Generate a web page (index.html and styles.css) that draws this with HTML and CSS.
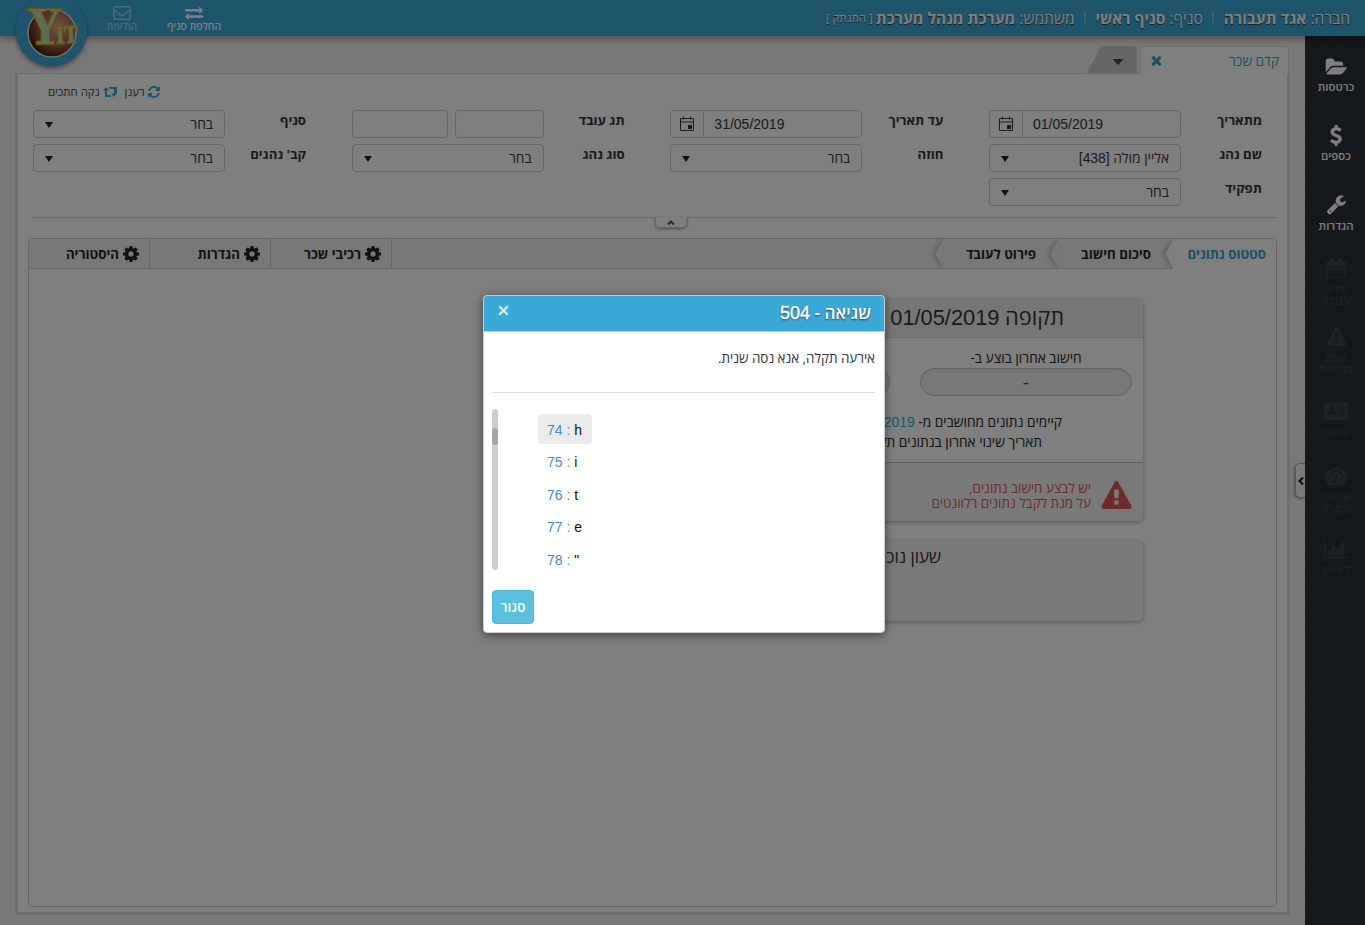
FILE: index.html
```html
<!DOCTYPE html>
<html lang="he" dir="rtl">
<head>
<meta charset="utf-8">
<title>קדם שכר</title>
<link rel="stylesheet" href="styles.css">
</head>
<body>
<svg class="defs" aria-hidden="true">
  <symbol id="cog" viewBox="128 128 1536 1536"><path d="M1152 896q0-106-75-181t-181-75-181 75-75 181 75 181 181 75 181-75 75-181zm512-109v222q0 12-8 23t-20 13l-185 28q-19 54-39 91 35 50 107 138 10 12 10 25t-9 23q-27 37-99 108t-94 71q-12 0-26-9l-138-108q-44 23-91 38-16 136-29 186-7 28-36 28h-222q-14 0-24.500-8.500t-11.500-21.500l-28-184q-49-16-90-37l-141 107q-10 9-25 9-14 0-25-11-126-114-165-168-7-10-7-23 0-12 8-23 15-21 51-66.500t54-70.500q-27-50-41-99l-183-27q-13-2-21-12.500t-8-23.500v-222q0-12 8-23t19-13l186-28q14-46 39-92-40-57-107-138-10-12-10-24 0-10 9-23 26-36 98.500-107.500t94.500-71.500q13 0 26 10l138 107q44-23 91-38 16-136 29-186 7-28 36-28h222q14 0 24.500 8.500t11.500 21.500l28 184q49 16 90 37l142-107q9-9 24-9 13 0 25 10 129 119 165 170 7 8 7 22 0 12-8 23-15 21-51 66.500t-54 70.500q26 50 41 98l183 28q13 2 21 12.500t8 23.500z"/></symbol>
  <symbol id="warn" viewBox="0 0 1792 1664"><path d="M1024 1375v-190q0-14-9.500-23.500t-22.500-9.500h-192q-13 0-22.500 9.500t-9.500 23.500v190q0 14 9.500 23.500t22.500 9.500h192q13 0 22.500-9.500t9.500-23.500zm-2-374l18-459q0-12-10-19-13-11-24-11h-220q-11 0-24 11-10 7-10 21l17 457q0 10 10 16.500t24 6.500h185q14 0 23.500-6.500t10.500-16.500zm-14-934l768 1408q35 63-2 126-17 29-46.500 46t-63.500 17h-1536q-34 0-63.500-17t-46.500-46q-37-63-2-126l768-1408q17-31 47-49t65-18 65 18 47 49z"/></symbol>
  <symbol id="times" viewBox="302 238 1188 1316"><path d="M1490 1322q0 40-28 68l-136 136q-28 28-68 28t-68-28l-294-294-294 294q-28 28-68 28t-68-28l-136-136q-28-28-28-68t28-68l294-294-294-294q-28-28-28-68t28-68l136-136q28-28 68-28t68 28l294 294 294-294q28-28 68-28t68 28l136 136q28 28 28 68t-28 68l-294 294 294 294q28 28 28 68z"/></symbol>
  <symbol id="date" viewBox="0 0 16 16"><path fill="none" stroke="currentColor" d="M1.500 2.500h13v12h-13zM1.500 6h13M4.500 .5v3M11.500 .5v3"/><path d="M9 9h4v4H9z"/></symbol>
</svg>

<header class="topbar">
  <div class="session">
    <span>חברה: <b>אגד תעבורה</b></span><i class="bar"></i>
    <span>סניף: <b>סניף ראשי</b></span><i class="bar"></i>
    <span>משתמש: <b>מערכת מנהל מערכת</b></span><small>[ התנתק ]</small>
  </div>
  <nav class="quick">
    <a class="quick-item"><svg width="18" height="14" viewBox="0 192 1792 1450" preserveAspectRatio="none"><path d="M1792 1184v192q0 13-9.500 22.500t-22.500 9.500h-1376v192q0 13-9.500 22.500t-22.500 9.500q-12 0-24-10l-319-320q-9-9-9-22 0-14 9-23l320-320q9-9 23-9 13 0 22.500 9.500t9.500 22.500v192h1376q13 0 22.500 9.500t9.500 22.500zm0-544q0 14-9 23l-320 320q-9 9-23 9-13 0-22.500-9.500t-9.500-22.500v-192h-1376q-13 0-22.500-9.500t-9.500-22.500v-192q0-13 9.500-22.500t22.500-9.500h1376v-192q0-14 9-23t23-9q12 0 24 10l319 319q9 9 9 23z"/></svg>החלפת סניף</a>
    <a class="quick-item faded"><svg width="18" height="14" viewBox="0 0 18 14"><g fill="none" stroke="currentColor" stroke-width="1.500"><rect x=".75" y=".75" width="16.500" height="12.500" rx="1.500"/><path d="M1 4l6.500 5q1.500 1 3 0L17 4"/></g></svg>הודעות</a>
  </nav>
  <svg class="logo" width="76" height="76" viewBox="0 0 76 76">
    <defs><radialGradient id="ball" cx=".62" cy=".38" r=".7"><stop offset="0" stop-color="#e0a585"/><stop offset=".55" stop-color="#9a6044"/><stop offset="1" stop-color="#2c1308"/></radialGradient></defs>
    <circle cx="37.500" cy="37" r="35.500" fill="#3ba9d8"/>
    <circle cx="38" cy="39" r="24" fill="url(#ball)" stroke="#d9e4e8" stroke-width="1.500"/>
    <g class="logo-text"><text x="14" y="50" font-size="53" textLength="34" lengthAdjust="spacingAndGlyphs">Y</text><text x="42" y="49" font-size="25" textLength="22" lengthAdjust="spacingAndGlyphs" transform="rotate(-3 52 40)">IT</text></g>
  </svg>
</header>

<div class="shell">
  <aside class="side">
    <a class="side-item"><svg width="22" height="17" viewBox="0 128 1944 1408"><path d="M1943 952q0 31-31 66l-336 396q-43 51-120.500 86.500t-143.500 35.500h-1088q-34 0-60.500-13t-26.500-43q0-31 31-66l336-396q43-51 120.500-86.500t143.500-35.500h1088q34 0 60.500 13t26.500 43zm-343-344v160h-832q-94 0-197 47.500t-164 119.500l-337 396-5 6q0-4-.5-12.500t-.5-12.500v-960q0-92 66-158t158-66h320q92 0 158 66t66 158v32h544q92 0 158 66t66 158z"/></svg><span>כרטסות</span></a>
    <a class="side-item"><svg width="22" height="21" viewBox="0 0 1792 1792"><path d="M1362 1185q0 153-99.500 263.500t-258.500 136.500v175q0 14-9 23t-23 9h-135q-13 0-22.500-9.500t-9.500-22.500v-175q-66-9-127.500-31t-101.500-44.500-74-48-46.500-37.500-17.500-18q-17-21-2-41l103-135q7-10 23-12 15-2 24 9l2 2q113 99 243 125 37 8 74 8 81 0 142.500-43t61.500-122q0-28-15-53t-33.500-42-58.500-37.500-66-32-80-32.500q-39-16-61.500-25t-61.500-26.500-62.500-31-56.500-35.500-53.500-42.500-43.500-49-35.500-58-21-66.500-8.500-78q0-138 98-242t255-134v-180q0-13 9.500-22.500t22.500-9.500h135q14 0 23 9t9 23v176q57 6 110.500 23t87 33.500 63.500 37.500 39 29 15 14q17 18 5 38l-81 146q-8 15-23 16-14 3-27-7-3-3-14.500-12t-39-26.500-58.500-32-74.500-26-85.500-11.500q-95 0-155 43t-60 111q0 26 8.500 48t29.500 41.500 39.500 33 56 31 60.500 27 70 27.500q53 20 81 31.500t76 35 75.500 42.500 62 50 53 63.500 31.500 76.500 13 94z" stroke="currentColor" stroke-width="60"/></svg><span>כספים</span></a>
    <a class="side-item"><svg width="20" height="20" viewBox="0 128 1728 1664"><path d="M448 1472q0-26-19-45t-45-19-45 19-19 45 19 45 45 19 45-19 19-45zm644-420l-682 682q-37 37-90 37-52 0-91-37l-106-108q-38-36-38-90 0-53 38-91l681-681q39 98 114.500 173.500t173.500 114.500zm634-435q0 39-23 106-47 134-164.500 217.500t-258.500 83.500q-185 0-316.500-131.500t-131.500-316.500 131.500-316.500 316.500-131.500q58 0 121.500 16.500t107.500 46.500q16 11 16 28t-16 28l-293 169v224l193 107q5-3 79-48.500t135.500-81 70.500-35.500q15 0 23.500 10t8.500 25z"/></svg><span>הגדרות</span></a>
    <a class="side-item off"><svg width="20" height="20" viewBox="0 0 20 20"><path fill-rule="evenodd" d="M1 3h3V1q0-1 1-1h1q1 0 1 1v2h6V1q0-1 1-1h1q1 0 1 1v2h3q1 0 1 1v15q0 1-1 1H1q-1 0-1-1V4q0-1 1-1zM2 8v2.500h3.300V8zm4.300 0v2.500h3.200V8zm4.200 0v2.500h3.200V8zm4.200 0v2.500H18V8zM2 11.500V14h3.300v-2.500zm4.300 0V14h3.200v-2.500zm4.200 0V14h3.200v-2.500zm4.200 0V14H18v-2.500zM2 15v3h3.300v-3zm4.300 0v3h3.200v-3zm4.200 0v3h3.200v-3zm4.200 0v3H18v-3z"/></svg><span>סידור<br>עבודה</span></a>
    <a class="side-item off"><svg width="21" height="19"><use href="#warn"/></svg><span>קצין<br>בטיחות</span></a>
    <a class="side-item off"><svg width="24" height="18" viewBox="0 0 24 18"><path fill-rule="evenodd" d="M2 0h20q2 0 2 2v14q0 2-2 2H2q-2 0-2-2V2Q0 0 2 0zm6 4a2.700 2.700 0 1 0 .01 0zM3.500 13h9q0-4-2.500-4-2 1.500-4 0-2.500 0-2.500 4zM14 5v1.500h7V5zm0 3v1.500h7V8zm0 3v1.500h7V11z"/></svg><span>פניות</span></a>
    <a class="side-item off"><svg width="20" height="17" viewBox="0 0 20 17"><path fill-rule="evenodd" d="M10 0a10 10 0 0 1 8.500 16q-.5 1-1.500 1H3q-1 0-1.500-1A10 10 0 0 1 10 0zM4 8.500a1.400 1.400 0 1 0 .01 0zm2-5a1.400 1.400 0 1 0 .01 0zM10 1.500a1.400 1.400 0 1 0 .01 0zm4 2a1.400 1.400 0 1 0 .01 0zm2 5a1.400 1.400 0 1 0 .01 0zM10.500 6L9 11a2 2 0 1 0 1.500.2L12 6z"/></svg><span>שליטה<br>ובקרה</span></a>
    <a class="side-item off"><svg width="24" height="18" viewBox="0 0 24 18"><path d="M0 0h1.500v16.500H24V18H0zM4 10h3v5H4zm4-5h3v10H8zm5 3h3v7h-3zm4-6h3v13h-3z"/></svg><span>דוחות</span></a>
    <i class="side-handle"><svg width="6" height="8" viewBox="0 0 6 8"><path d="M5 .5L1.500 4L5 7.500" fill="none" stroke="#111" stroke-width="2"/></svg></i>
  </aside>

  <main class="main">
    <div class="tabs">
      <div class="tab-active"><span>קדם שכר</span><svg width="11" height="11"><use href="#times"/></svg></div>
      <svg class="tab-more" width="50" height="27" viewBox="0 0 50 27"><path d="M0 27L12 4Q14 0 18 0H46Q50 0 50 4V27z" fill="#ccc"/><path d="M25.500 13h11l-5.500 6z" fill="#444"/></svg>
    </div>
    <section class="panel">
      <div class="tools">
        <a>רענן<svg width="12" height="12" viewBox="128 128 1536 1536"><path d="M1639 1056q0 5-1 7-64 268-268 434.500t-478 166.500q-146 0-282.500-55t-243.500-157l-129 129q-19 19-45 19t-45-19-19-45v-448q0-26 19-45t45-19h448q26 0 45 19t19 45-19 45l-137 137q71 66 161 102t187 36q134 0 250-65t186-179q11-17 53-117 8-23 30-23h192q13 0 22.500 9.500t9.500 22.500zm25-800v448q0 26-19 45t-45 19h-448q-26 0-45-19t-19-45 19-45l138-138q-148-137-349-137-134 0-250 65t-186 179q-11 17-53 117-8 23-30 23h-199q-13 0-22.500-9.500t-9.500-22.500v-7q65-268 270-434.500t480-166.500q146 0 284 55.500t245 156.500l130-129q19-19 45-19t45 19 19 45z"/></svg></a>
        <a>נקה חתכים<svg width="14" height="10" viewBox="0 0 14 10"><path d="M3 0L6 3.500H4V8h3l1.500 2H2V3.500H0zM5.500 0H14v6.500l-1.500 0h1L11 10L8 6.500h3V2H7z"/></svg></a>
      </div>
      <div class="filters">
        <div class="field"><label>מתאריך</label><div class="box date"><span>01/05/2019</span><i><svg width="16" height="16"><use href="#date"/></svg></i></div></div>
        <div class="field"><label>עד תאריך</label><div class="box date"><span>31/05/2019</span><i><svg width="16" height="16"><use href="#date"/></svg></i></div></div>
        <div class="field"><label>תג עובד</label><div class="pair"><div class="box"></div><div class="box wide"></div></div></div>
        <div class="field"><label>סניף</label><div class="box select">בחר</div></div>
        <div class="field"><label>שם נהג</label><div class="box select"><span>אליין מולה <span class="num">[438]</span></span></div></div>
        <div class="field"><label>חוזה</label><div class="box select">בחר</div></div>
        <div class="field"><label>סוג נהג</label><div class="box select">בחר</div></div>
        <div class="field"><label>קב' נהגים</label><div class="box select">בחר</div></div>
        <div class="field"><label>תפקיד</label><div class="box select">בחר</div></div>
      </div>
      <div class="divider"><i class="fold"><svg width="8" height="5" viewBox="0 0 8 5"><path d="M1 4.500L4 1.500L7 4.500" fill="none" stroke="#555" stroke-width="2"/></svg></i></div>
      <section class="work">
        <div class="steps">
          <div class="step current">סטטוס נתונים</div>
          <svg class="arrow first" width="9" height="30" viewBox="0 0 9 30"><path d="M9 0L1 15L9 30z" fill="#fff"/><path d="M9 0L1 15L9 30" fill="none" stroke="#ccc"/></svg>
          <div class="step">סיכום חישוב</div>
          <svg class="arrow" width="9" height="30" viewBox="0 0 9 30"><path d="M9 0L1 15L9 30z" fill="#f0f0f0"/><path d="M9 0L1 15L9 30" fill="none" stroke="#ccc"/></svg>
          <div class="step">פירוט לעובד</div>
          <svg class="arrow" width="9" height="30" viewBox="0 0 9 30"><path d="M9 0L1 15L9 30z" fill="#f0f0f0"/><path d="M9 0L1 15L9 30" fill="none" stroke="#ccc"/></svg>
          <div class="actions">
            <a><svg width="16" height="16"><use href="#cog"/></svg>רכיבי שכר</a>
            <a><svg width="16" height="16"><use href="#cog"/></svg>הגדרות</a>
            <a><svg width="16" height="16"><use href="#cog"/></svg>היסטוריה</a>
          </div>
        </div>
        <article class="card">
          <h2>תקופה <span class="num">01/05/2019</span></h2>
          <div class="card-body">
            <div class="pills">
              <div><p>חישוב אחרון בוצע ב-</p><div class="pill">-</div></div>
              <div><p></p><div class="pill"></div></div>
            </div>
            <p class="line">קיימים נתונים מחושבים מ- <em>01/05/2019</em></p>
            <p class="line second">תאריך שינוי אחרון בנתונים תקופה</p>
          </div>
          <div class="alert"><svg width="31" height="28" viewBox="0 0 31 28"><use href="#warn" width="31" height="28"/></svg><span>יש לבצע חישוב נתונים,<br>על מנת לקבל נתונים רלוונטים</span></div>
        </article>
        <article class="card clock">שעון נוכחות</article>
      </section>
    </section>
  </main>
</div>

<div class="backdrop"></div>
<div class="modal" role="dialog">
  <div class="modal-head"><h1>שגיאה - <span class="num">504</span></h1><svg width="11" height="11" viewBox="0 0 11 11"><path d="M1.200 1.200l8.600 8.600M9.800 1.200l-8.600 8.600" stroke="#d3ecf7" stroke-width="2.300"/></svg></div>
  <p class="message">אירעה תקלה, אנא נסה שנית.</p>
  <div class="scroll" dir="ltr">
    <div class="track"><i></i></div>
    <ul>
      <li class="hit"><b>74 :</b> h</li>
      <li><b>75 :</b> i</li>
      <li><b>76 :</b> t</li>
      <li><b>77 :</b> e</li>
      <li><b>78 :</b> "</li>
    </ul>
  </div>
  <button class="close">סגור</button>
</div>
</body>
</html>
```
FILE: styles.css
```css
* { box-sizing: border-box; }
body { margin: 0; height: 925px; overflow: hidden; background: #f0f0f0; color: #333; font: 14px "Open Sans", "Liberation Sans", sans-serif; display: flex; flex-direction: column; }
p, h1, h2, ul { margin: 0; padding: 0; }
svg { fill: currentColor; flex: none; }
.defs { position: absolute; width: 0; height: 0; }
.num { font-family: "Liberation Sans", sans-serif; }

.topbar { position: relative; z-index: 2; flex: none; height: 36px; background: #3ba9d8; color: #fff; display: flex; justify-content: space-between; box-shadow: 0 2px 8px rgba(0,0,0,.4); }
.session { display: flex; align-items: center; padding: 0 15px 1px 0; font-size: 15.55px; text-shadow: 0 1px 1px #333; white-space: nowrap; }
.session small { font-size: 11.5px; margin-right: 3px; }
.bar { width: 2px; height: 15px; margin: 0 9.500px; background: #73c1e3; }
.quick { display: flex; padding-left: 104px; }
.quick-item { display: flex; flex-direction: column; align-items: center; padding-top: 6px; font-size: 10.3px; line-height: 13px; font-weight: 600; white-space: nowrap; width: 56px; }
.quick-item.faded { opacity: .5; width: 36px; margin-right: 26px; }
.logo { position: absolute; left: 14px; top: -6px; filter: drop-shadow(0 2px 2px rgba(0,0,0,.4)); direction: ltr; overflow: visible; }
.logo-text { fill: #bddaa5; stroke: #d9a21a; stroke-width: 2.400px; paint-order: stroke; font-family: "Liberation Serif", serif; font-weight: bold; }

.shell { flex: 1; display: flex; min-height: 0; }
.side { position: relative; width: 60px; flex: none; padding-top: 18px; color: #fff; background: repeating-linear-gradient(45deg, #272e35 0 1px, #2a3138 1px 3px); }
.side-item { display: grid; grid-template-rows: 24px auto; align-content: start; justify-items: center; align-items: center; row-gap: 3px; height: 69px; padding-left: 2px; font-size: 11.4px; line-height: 12px; font-weight: 600; text-align: center; }
.side-item:nth-child(2) { height: 70px; }
.side-item:nth-child(3) { height: 63px; }
.side-item:nth-child(4) { height: 68px; }
.side-item:nth-child(5) { height: 75px; }
.side-item:nth-child(6) { height: 65px; }
.side-item:nth-child(7) { height: 73px; }
.side-item.off { color: #3b4249; }
.side-handle { position: absolute; left: -10px; top: 427px; width: 10px; height: 35px; background: #f4f4f4; border: 1px solid #aaa; border-right: 0; border-radius: 5px 0 0 5px; display: grid; place-items: center; box-shadow: -1px 1px 3px rgba(0,0,0,.3); }

.main { flex: 1; padding: 10px 15px 10px; display: flex; flex-direction: column; min-width: 0; }
.tabs { display: flex; height: 27px; gap: 3px; padding-right: 1px; }
.tab-active { width: 149px; height: 28px; background: #fff; border: 1px solid #ddd; border-bottom: 0; border-radius: 4px 4px 0 0; display: flex; align-items: center; justify-content: space-between; padding: 0 9px 1px 10px; color: #3b9fc9; font-size: 13.6px; position: relative; }
.panel { flex: 1; background: #fff; border: solid #dadada; border-width: 1px 3px 3px; padding: 10px 10px 5px; display: flex; flex-direction: column; min-height: 0; }
.tools { display: flex; direction: ltr; flex-direction: row-reverse; justify-content: flex-end; gap: 8px; padding-left: 20px; height: 16px; align-items: center; font-size: 11.4px; line-height: 14px; color: #444; }
.tools a { display: flex; gap: 3px; align-items: center; }
.tools svg { color: #3ba9d8; }

.filters { margin: 10px 15px 0 5px; display: grid; grid-template-columns: repeat(4, 273px); justify-content: space-between; row-gap: 6px; }
.field { display: flex; justify-content: space-between; height: 28px; font-size: 13.2px; }
.field label { font-weight: bold; line-height: 20px; white-space: nowrap; }
.box { width: 192px; height: 28px; border: 1px solid #ccc; border-radius: 4px; background: #fff; }
.pair { width: 192px; display: flex; gap: 7px; }
.pair .box { width: 89px; }
.pair .wide { width: 96px; }
.date { display: flex; direction: ltr; flex-direction: row-reverse; justify-content: flex-end; align-items: center; font: 14px/26px "Liberation Sans", sans-serif; }
.date i { width: 33px; height: 26px; border-right: 1px solid #ccc; display: grid; place-items: center; margin-right: 10px; }
.select { display: flex; justify-content: space-between; align-items: center; padding: 0 11px 2px; font-size: 13.8px; }
.select::after { content: ""; border: solid transparent; border-width: 6px 4.500px 0; border-top-color: #222; margin-top: 4px; }
.divider { height: 1px; flex: none; background: #d5d5d5; margin: 11px 1px 20px 4px; display: flex; justify-content: center; }
.fold { width: 32px; height: 11px; flex: none; background: #fff; border: 1px solid #ccc; border-top: 0; border-radius: 0 0 5px 5px; box-shadow: 0 1px 3px rgba(0,0,0,.4); display: grid; place-items: center; margin-right: -33px; }

.work { flex: 1; border: 1px solid #ccc; border-radius: 5px; min-height: 0; }
.steps { display: flex; height: 30px; background: #f0f0f0; border-bottom: 1px solid #ccc; border-radius: 4px 4px 0 0; font-size: 13.3px; font-weight: bold; color: #222; }
.step { width: 106px; padding-right: 13px; display: flex; align-items: center; white-space: nowrap; }
.step.current { width: 103px; height: 30px; padding-right: 10px; background: #fff; color: #3b9fc9; border-radius: 0 4px 0 0; }
.arrow { filter: drop-shadow(-2px 0 2px rgba(0,0,0,.2)); }
.actions { margin-right: auto; display: flex; }
.actions a { width: 121px; border-left: 1px solid #ccc; display: flex; align-items: center; gap: 4px; padding-right: 10px; }
.actions a:first-child { width: 122px; border-right: 1px solid #ccc; }
.actions a:last-child { width: 120px; border-left: 0; }

.card { width: 475px; margin: 30px 133px 0 0; background: #f2f2f2; border-radius: 5px; box-shadow: 0 1px 4px rgba(0,0,0,.35); overflow: hidden; height: 222px; }
.card h2 { height: 39px; padding-right: 79px; font-size: 21.8px; line-height: 36px; font-weight: normal; color: #333; border-bottom: 1px solid #ddd; background: #ededed; }
.card-body { background: #fff; height: 125px; border-bottom: 1px solid #bbb; padding-top: 11px; white-space: nowrap; color: #222; font-size: 13.7px; }
.pills { display: flex; gap: 30px; padding-right: 11px; text-align: center; }
.pills p { height: 19px; line-height: 18px; }
.pill { width: 212px; height: 28px; border: 1px solid #c6c6c6; border-radius: 14px; background: #f0f0f0; line-height: 26px; box-shadow: inset 0 1px 3px rgba(0,0,0,.1); font-size: 20px; color: #555; }
.line { padding-right: 81px; line-height: 20px; padding-top: 16px; }
.line.second { padding: 0 101px 0 0; }
.line em { font: 14px "Liberation Sans", sans-serif; color: #3ba9d8; }
.alert { display: flex; padding: 18px 11px 0; gap: 10px; color: #dc5454; font-size: 13.4px; line-height: 14.500px; }
.card.clock { margin-top: 20px; height: 80px; padding: 5px 202px 0 0; font-size: 17px; line-height: 22px; color: #333; }

.backdrop { position: absolute; inset: 0; z-index: 5; background: rgba(0,0,0,.5); }
.modal { position: absolute; z-index: 6; left: 483px; top: 295px; width: 402px; height: 338px; background: #fff; border: 1px solid #ccc; border-radius: 4px; box-shadow: 0 2px 10px rgba(0,0,0,.5); overflow: hidden; }
.modal-head { height: 36px; background: #3ba9d8; border-bottom: 1px solid #ccc; display: flex; justify-content: space-between; padding: 0 13px 0 14px; color: #fff; }
.modal-head h1 { font-size: 17.2px; line-height: 33px; text-shadow: 0 1px 2px #333; font-weight: 600; }
.modal-head .num { font-size: 18px; font-weight: normal; -webkit-text-stroke: .4px #fff; }
.modal-head svg { margin-top: 9px; }
.message { margin: 0 9px 0 8px; height: 61px; border-bottom: 1px solid #ddd; padding-top: 16px; line-height: 20px; font-size: 13.4px; }
.scroll { display: flex; height: 161px; margin: 16px 8px 20px; }
.track { width: 6px; border-radius: 3px; background: #ccc; padding-top: 19px; }
.track i { display: block; height: 17px; background: #a5a5a5; border-radius: 3px; }
.scroll ul { list-style: none; padding: 5px 0 0 40px; display: flex; flex-direction: column; gap: 2.450px; font: 14px "Liberation Sans", sans-serif; color: #111; }
.scroll li { width: 54px; height: 30px; line-height: 32px; padding-left: 9px; border-radius: 4px; white-space: nowrap; }
.scroll b { font-weight: normal; color: #428bca; }
.hit { background: #ebebeb; }
.close { display: block; margin: 0 auto 0 8px; width: 42px; height: 34px; border: 1px solid #46b8da; border-radius: 4px; background: #5bc0de; color: #fff; font: 600 13.5px "Open Sans", sans-serif; padding: 0; }
```
